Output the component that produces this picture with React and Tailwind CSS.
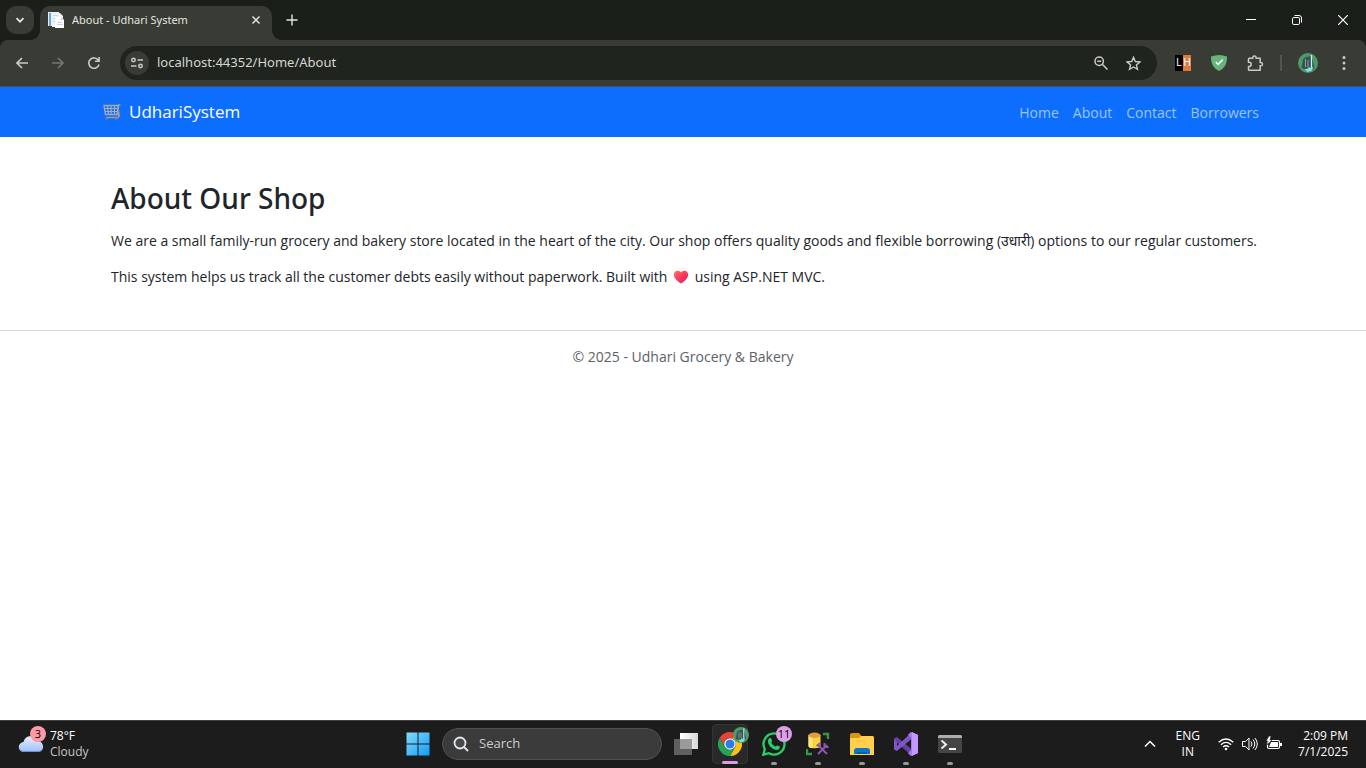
const ui = "font-['Open_Sans','Noto_Sans',sans-serif]";

function Svg({ size = 16, className = '', children, ...rest }) {
  return (
    <svg width={size} height={size} viewBox={`0 0 ${size} ${size}`} fill="none" aria-hidden="true" className={`shrink-0 ${className}`} {...rest}>
      {children}
    </svg>
  );
}

function PagesIcon() {
  return (
    <Svg size={16}>
      <path d="M0 0h11v14H0z" fill="#e6edf2" />
      <path d="M1 1h2v13H1z" fill="#70a9cf" />
      <path d="M4 1h8l3 3v11H4z" fill="#f0f3f6" />
      <path d="M5 3h5v1H5zM5 6h7v1H5zM5 9h5v1H5z" fill="#cbd7e1" />
      <path d="M7 5h6l3 3v8H7z" fill="#fff" />
      <path d="M13 5v3h3zM9 10h5v1H9zM9 12h6v1H9z" fill="#c8d3dd" />
    </Svg>
  );
}

function Avatar({ size }) {
  return (
    <svg width={size} height={size} viewBox="0 0 20 20" aria-hidden="true" className="shrink-0">
      <circle cx="10" cy="10" r="10" fill="#4d9b68" />
      <path d="M5 6 8 4l5-1 1.500 3 2 9-4 3.500-5-1-4-3z" fill="#3c5355" />
      <path d="M13.500 2v13l-2 2.500" stroke="#c4f7f1" strokeWidth="1.300" fill="none" />
      <path d="M7.500 6v8M10 7v7" stroke="#78a49e" fill="none" />
      <path d="M6 16h3l2-2 1.500 1 3-1-2 4-4 1z" fill="#7de0d0" />
    </svg>
  );
}

function CartIcon() {
  return (
    <svg width="18" height="18" viewBox="0 0 18 18" fill="none" aria-hidden="true" className="shrink-0">
      <path d="M17.500 2h-1.800l-1 8.500 1.800 2-1.500 2H3" stroke="#a79c98" strokeWidth="1.300" />
      <path d="M1 2.500h14l-.8 9H2.500z" stroke="#a9a6ac" strokeWidth="1.400" />
      <path d="M1.500 5.500h13M1.800 8.500h12.500M4.500 3l1 8M8 3v8M11.500 3v8" stroke="#a3adbd" strokeWidth="1.200" />
      <path d="M15.500 8.500v4" stroke="#b19c90" strokeWidth="2" />
      <circle cx="3.500" cy="15.500" r="1.300" fill="#777f91" />
      <circle cx="13.500" cy="15.500" r="1.300" fill="#777f91" />
    </svg>
  );
}

function Heart() {
  return (
    <svg width="16" height="14" viewBox="0 0 16 14" role="img" aria-label="love" className="mx-0.5 inline-block align-[-2px]">
      <defs>
        <linearGradient id="heart" x1="0" y1="0" x2="1" y2="1">
          <stop offset="0" stopColor="#ff7464" />
          <stop offset=".5" stopColor="#f83b5e" />
          <stop offset="1" stopColor="#d22074" />
        </linearGradient>
      </defs>
      <path d="M8 2.500C6.500.300 3.700.200 2.200 1.600.4 3.200.5 6.300 2 8.300 3.700 10.600 6.500 12.800 8 13.500c1.500-.7 4.300-2.900 6-5.200 1.500-2 1.600-5.100-.2-6.700C12.300.200 9.500.300 8 2.500z" fill="url(#heart)" />
    </svg>
  );
}

function TabStrip() {
  return (
    <div className="flex h-10 items-center bg-[#1b1f1a] pl-1.5 text-[#e3e5e0]">
      <button aria-label="Search tabs" className="grid size-7 place-items-center rounded-[10px] bg-[#383c35]">
        <Svg size={10}><path d="m1.500 3.200 3.500 3.500 3.500-3.500" stroke="currentColor" strokeWidth="1.800" /></Svg>
      </button>
      <div className="relative ml-1.5 flex h-[34px] w-[232px] items-center gap-2 self-end rounded-t-[10px] bg-[#383c35] pl-2 pr-2.5 pb-1.5 before:absolute before:bottom-0 before:-left-2.5 before:size-2.5 before:bg-[radial-gradient(circle_at_0_0,transparent_10px,#383c35_10px)] after:absolute after:-right-2.5 after:bottom-0 after:size-2.5 after:bg-[radial-gradient(circle_at_100%_0,transparent_10px,#383c35_10px)]">
        <PagesIcon />
        <span className="flex-1 truncate font-['Noto_Sans',sans-serif] text-[11px] leading-4">About - Udhari System</span>
        <button aria-label="Close tab" className="grid size-3 place-items-center">
          <Svg size={10}><path d="m1.500 1.500 7 7m0-7-7 7" stroke="currentColor" strokeWidth="1.500" /></Svg>
        </button>
      </div>
      <button aria-label="New tab" className="ml-3.5 grid size-3 place-items-center">
        <Svg size={12}><path d="M6 .5v11M.5 6h11" stroke="currentColor" strokeWidth="1.400" /></Svg>
      </button>
      <div className="ml-auto flex h-full text-white">
        <button aria-label="Minimize" className="grid w-[46px] place-items-center"><Svg size={10}><path d="M0 4.500h10" stroke="currentColor" /></Svg></button>
        <button aria-label="Restore" className="grid w-[46px] place-items-center">
          <Svg size={10}><rect x=".5" y="2.500" width="7" height="7" rx="1.300" stroke="currentColor" /><path d="M2.500.5H7A2.500 2.500 0 0 1 9.500 3v4.500" stroke="currentColor" /></Svg>
        </button>
        <button aria-label="Close window" className="grid w-[46px] place-items-center"><Svg size={10}><path d="m0 0 10 10m0-10L0 10" stroke="currentColor" strokeWidth="1.200" /></Svg></button>
      </div>
    </div>
  );
}

function Toolbar() {
  return (
    <div className="bg-[#1b1f1a]">
      <div className="flex h-[47px] items-center rounded-t-lg border-b border-[#4b4f48] bg-[#383c35] pl-4 pr-3.5 text-[#c8cac4]">
        <button aria-label="Back"><Svg size={12}><path d="M12 6H1.500M6 1 1 6l5 5" stroke="currentColor" strokeWidth="1.600" /></Svg></button>
        <button aria-label="Forward" className="ml-6 text-[#747770]" disabled><Svg size={12}><path d="M0 6h10.500M6 1l5 5-5 5" stroke="currentColor" strokeWidth="1.600" /></Svg></button>
        <button aria-label="Reload" className="ml-6"><Svg size={12}><path d="M10.300 3.200A5.200 5.200 0 1 0 11 7.500M11.100 0v4.200H7" stroke="currentColor" strokeWidth="1.600" /></Svg></button>
        <div className="ml-5 flex h-[34px] flex-1 items-center rounded-full bg-[#20241f] pl-[5px] pr-4">
          <button aria-label="Site information" className="grid size-6 place-items-center rounded-full bg-[#383c35]">
            <Svg size={12} stroke="currentColor" strokeWidth="1.500"><circle cx="2.500" cy="3" r="1.700" /><path d="M6.500 3H12M0 9h5.500" /><circle cx="9.500" cy="9" r="1.700" /></Svg>
          </button>
          <input aria-label="Address" defaultValue="localhost:44352/Home/About" className="ml-2 min-w-0 flex-1 bg-transparent font-['Noto_Sans',sans-serif] text-[13px] text-[#d5d7d1] outline-none" />
          <button aria-label="Zoom level"><Svg size={14} stroke="currentColor" strokeWidth="1.500"><circle cx="5.200" cy="5.200" r="4.200" /><path d="m8.300 8.300 5.200 5.200M3.200 5.200h4" /></Svg></button>
          <button aria-label="Bookmark this tab" className="ml-[18px]"><Svg size={15}><path d="m7.500 1.300 1.800 4.200 4.600.4-3.500 3 1.100 4.500-4-2.400-4 2.400 1.100-4.500-3.500-3 4.600-.4z" stroke="currentColor" strokeWidth="1.400" /></Svg></button>
        </div>
        <button aria-label="LH extension" className="ml-[18px] flex size-4 text-center font-['Liberation_Sans',sans-serif] text-[10px] leading-4 text-white">
          <span className="w-1/2 bg-black">L</span><span className="w-1/2 bg-[#e17b3c]">H</span>
        </button>
        <button aria-label="Ad blocker" className="ml-5"><Svg size={16}><path d="M0 1.500Q4 0 8 0t8 1.500Q16.500 12.500 8 16-.5 12.500 0 1.500z" fill="#68b47a" /><path d="m4.800 7 2.400 2.500 4.500-5" stroke="#fff" strokeWidth="1.500" /></Svg></button>
        <button aria-label="Extensions" className="ml-5"><Svg size={17}><path d="M2.250 3.250h3.500V2.800a1.700 1.700 0 0 1 3.400 0v.45h4v4.200h.6a1.700 1.700 0 0 1 0 3.400h-.6v4.400H2.250q-.75 0-.75-.75v-3.100h.6a2.100 2.100 0 0 0 0-4.200h-.6V4q0-.75.75-.75z" stroke="currentColor" strokeWidth="1.500" /></Svg></button>
        <span className="mx-4 h-4 w-0.5 bg-[#51554e]" />
        <button aria-label="Profile"><Avatar size={20} /></button>
        <button aria-label="Menu" className="ml-[18px]"><Svg size={16} fill="currentColor"><circle cx="8" cy="2.500" r="1.500" /><circle cx="8" cy="8" r="1.500" /><circle cx="8" cy="13.500" r="1.500" /></Svg></button>
      </div>
    </div>
  );
}

function Page() {
  return (
    <div className="flex-1 bg-white text-[#212529]">
      <nav className="bg-[#0d6efd]">
        <div className="mx-auto flex h-[50px] max-w-[1188px] items-center justify-between pl-3.5 pr-[18px]">
          <a href="#home" className="flex items-center gap-2 text-[17px] text-white"><CartIcon />UdhariSystem</a>
          <div className="flex gap-3.5 text-[14px] text-[#9ec5fe]">
            {['Home', 'About', 'Contact', 'Borrowers'].map((t) => <a key={t} href={`#${t.toLowerCase()}`}>{t}</a>)}
          </div>
        </div>
      </nav>
      <main className="mx-auto max-w-[1188px] pt-11 pr-3 pb-[42px] pl-[22px] text-[14px] leading-[22px]">
        <h1 className="font-['Noto_Sans',sans-serif] text-[28px] leading-[35px] font-medium">About Our Shop</h1>
        <p className="mt-3.5">We are a small family-run grocery and bakery store located in the heart of the city. Our shop offers quality goods and flexible borrowing (उधारी) options to our regular customers.</p>
        <p className="mt-3.5">This system helps us track all the customer debts easily without paperwork. Built with <Heart /> using ASP.NET MVC.</p>
      </main>
      <footer className="border-t border-[#d5d7d9] py-[15px] text-center text-[14px] leading-[22px] text-[#5c6166]">© 2025 - Udhari Grocery &amp; Bakery</footer>
    </div>
  );
}

function Task({ label, active, children }) {
  return (
    <button aria-label={label} className={`relative grid h-10 w-9 place-items-center rounded ${active ? 'border border-[#343434] bg-[#292929]' : ''}`}>
      {children}
      <span className={`absolute -bottom-px h-[3px] rounded-full ${active ? 'w-4 bg-[#dc9be4]' : 'w-1.5 bg-[#989898]'}`} />
    </button>
  );
}

function Taskbar() {
  return (
    <div className="grid h-12 grid-cols-[1fr_auto_1fr] items-center border-t border-[#3f4241] bg-[#1c1c1c] pb-px text-white">
      <button className="relative flex items-center gap-1.5 justify-self-start pl-[18px] text-left text-[12px] leading-4">
        <svg width="26" height="18" viewBox="0 0 26 18" aria-hidden="true">
          <defs><linearGradient id="cloud" x1="0" y1="0" x2="0" y2="1"><stop stopColor="#e5efff" /><stop offset="1" stopColor="#9ebff5" /></linearGradient></defs>
          <path d="M6 17a5 5 0 0 1-.5-10C7-.5 17-.5 19 6c8 0 8 11 1 11z" fill="url(#cloud)" />
          <path d="M2 14.500q1 2 4 2h14q3 0 4-2" fill="none" stroke="#6393e4" />
        </svg>
        <span className="absolute -top-0.5 left-[30px] grid size-4 place-items-center rounded-full bg-[#ff99a4] text-[11px] text-black">3</span>
        <span><span className="block">78°F</span><span className="block text-[#c6c6c6]">Cloudy</span></span>
      </button>
      <div className="flex items-center gap-2 pl-1">
        <button aria-label="Start" className="grid w-8 place-items-center">
          <Svg size={24}><defs><linearGradient id="win" x1="0" y1="0" x2="1" y2="1"><stop stopColor="#83dcff" /><stop offset="1" stopColor="#129bf6" /></linearGradient></defs><path d="M.5.5h11v11H.5zM12.500.5h11v11h-11zM.5 12.500h11v11H.5zM12.500 12.500h11v11h-11z" fill="url(#win)" /></Svg>
        </button>
        <label className="flex h-8 w-[220px] items-center gap-2.5 rounded-full border border-[#505050] bg-[#3b3b3b] pl-2.5">
          <Svg size={16} stroke="#e5e8ed" strokeWidth="1.800"><circle cx="7" cy="7" r="5.500" fill="#48494b" /><path d="m11 11 4 4" /></Svg>
          <input aria-label="Search" placeholder="Search" className="w-36 bg-transparent text-[13px] outline-none placeholder:text-[#cecece]" />
        </label>
        <button aria-label="Task view" className="grid w-8 place-items-center">
          <Svg size={24}><defs><linearGradient id="tv"><stop stopColor="#fff" /><stop offset="1" stopColor="#d8d8d8" /></linearGradient></defs><path d="M6 1h18v16H6z" fill="url(#tv)" /><path d="M0 7h18v16H0z" fill="#606060" /><path d="M6 7h12v10H6z" fill="#9b9b9b" /></Svg>
        </button>
        <div className="flex gap-2 pl-0.5">
          <Task label="Chrome" active>
            <svg width="24" height="24" viewBox="0 0 24 24" aria-hidden="true">
              <path d="M1.600 6A12 12 0 0 1 22.400 6H12a6 6 0 0 0-5.200 9z" fill="#e94335" />
              <path d="M22.400 6A12 12 0 0 1 12 24l5.200-9A6 6 0 0 0 12 6z" fill="#fbc116" />
              <path d="M1.600 6A12 12 0 0 0 12 24l5.200-9a6 6 0 0 1-10.400 0z" fill="#23a455" />
              <circle cx="12" cy="12" r="5.800" fill="#fff" /><circle cx="12" cy="12" r="4.500" fill="#287de9" />
            </svg>
            <span className="absolute top-0.5 -right-0.5"><Avatar size={16} /></span>
          </Task>
          <Task label="WhatsApp">
            <Svg size={24}><path d="M1.300 22.700 2.800 17A10.500 10.500 0 1 1 7 21.200z" stroke="#28cf66" strokeWidth="2.300" /><path d="M8 6c.8 0 1 0 1.300.8l.8 2c.2.5-1 1.400-.8 1.800.9 1.900 2.200 3.100 4.200 4 .5.200 1.200-1.400 1.700-1.200l2.500 1.200c.6.300 0 3.400-3.200 3.400C10 17.500 5.500 12.500 5.900 9 6.100 7.500 7 6 8 6z" fill="#28cf66" /></Svg>
            <span className="absolute top-0.5 right-0 grid size-4 place-items-center rounded-full bg-[#dda0e6] text-[11px] text-black">11</span>
          </Task>
          <Task label="Database tools">
            <Svg size={24}><path d="M2.500 3v11c0 3 12 3 12 0V3z" fill="#fbd43d" /><path d="M2.500 3v11c0 1.500 2 2.200 4 2.300V3z" fill="#ffe77a" /><ellipse cx="8.500" cy="3.300" rx="6" ry="2.700" fill="#e49c3e" /><path d="M17 2h5v5M1 17v5h5" stroke="#36944b" strokeWidth="2.400" /><path d="m12 22 9-9M12 13l9 9M10.500 14l4-3M18.500 11v4h4" stroke="#8e55b5" strokeWidth="2" /></Svg>
          </Task>
          <Task label="File Explorer">
            <Svg size={24}><path d="M0 3q0-2 2-2h7l2.500 3H22q2 0 2 2v6H0z" fill="#d99708" /><path d="M0 6h9l2-2h11q2 0 2 2v17H0z" fill="#ffcf4d" /><path d="M4 22v-3q0-3 3-3h10q3 0 3 3v3z" fill="#0b77c7" /><path d="M7 20h10v2H7z" fill="#075b9f" /></Svg>
          </Task>
          <Task label="Visual Studio">
            <Svg size={24}><path d="M0 6.500 3 5l15 12.500V24L0 8z" fill="#6541a2" /><path d="M0 7v10.500L3 19 18 6.500V0L3 14V10z" fill="#7f55c7" /><path d="m17 0 7 3v18l-7 3-3-2.700 3-3.300V6l-3-3.300z" fill="#a77af0" /><path d="m18 0 6 3v18l-6 3z" fill="#c497ff" /></Svg>
          </Task>
          <Task label="Terminal">
            <Svg size={24}><rect y="3" width="24" height="18" rx="1.500" fill="#454545" /><path d="M0 6V4.500Q0 3 1.500 3h21Q24 3 24 4.500V6z" fill="#adadad" /><path d="m3.500 8.500 4.500 4-4.500 4" stroke="#eee" strokeWidth="2" /><path d="M11 17h7" stroke="#fff" strokeWidth="2" /></Svg>
          </Task>
        </div>
      </div>
      <div className="flex items-center justify-self-end pr-[18px] text-[12px] leading-4">
        <button aria-label="Show hidden icons"><Svg size={12}><path d="m1 8.500 5-5 5 5" stroke="currentColor" strokeWidth="1.500" /></Svg></button>
        <button className="ml-5 text-center"><span className="block">ENG</span><span className="block">IN</span></button>
        <button aria-label="Quick settings" className="ml-[18px] flex items-center gap-2">
          <Svg size={16} stroke="currentColor" strokeWidth="1.300"><path d="M.7 6.200q7.300-6.500 14.600 0" /><path d="M2.900 8.700q5.100-4.600 10.200 0" /><path d="M5 11q3-2.600 6 0" /><circle cx="8" cy="13" r="1.300" fill="currentColor" stroke="none" /></Svg>
          <Svg size={16} stroke="currentColor"><path d="M.5 5.500h3L7 2v12l-3.500-3.500h-3zM9 5.500q2 2.500 0 5M11 3.500q3.500 4.500 0 9M13 2q4.500 6 0 12" /></Svg>
          <Svg size={16}><rect x="1.500" y="4.500" width="12" height="8" rx="1.500" stroke="currentColor" strokeWidth="1.200" /><path d="M5 6h7v5H3zM14 7h2v3h-2z" fill="currentColor" /><path d="m3 0-3 5h2L1 9l5-5H4l1-4z" fill="currentColor" stroke="#1c1c1c" strokeWidth=".6" /></Svg>
        </button>
        <button className="ml-4 text-right"><span className="block">2:09 PM</span><span className="block">7/1/2025</span></button>
      </div>
    </div>
  );
}

export default function App() {
  return (
    <div className={`flex min-h-screen flex-col ${ui}`}>
      <TabStrip />
      <Toolbar />
      <Page />
      <Taskbar />
    </div>
  );
}
